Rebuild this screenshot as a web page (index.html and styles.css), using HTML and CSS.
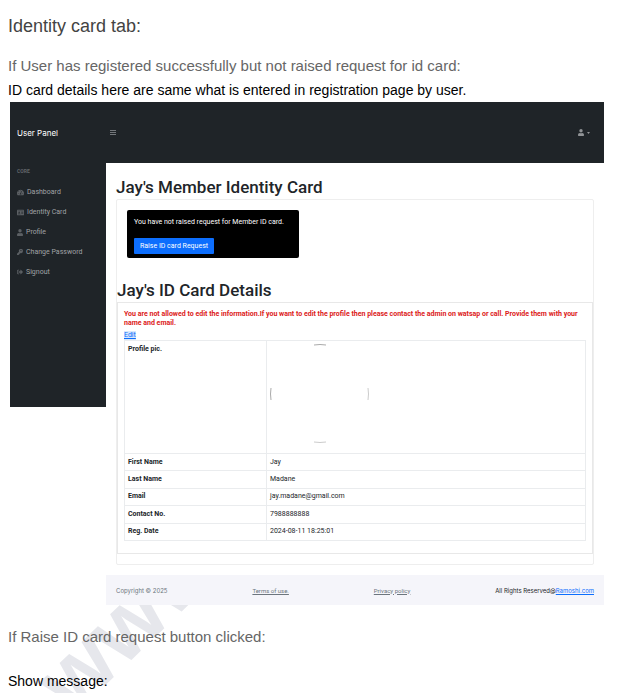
FILE: index.html
```html
<!DOCTYPE html>
<html lang="en">
<head>
<meta charset="utf-8">
<title>Identity card tab</title>
<meta name="viewport" content="width=device-width, initial-scale=1">
<link rel="stylesheet" href="styles.css">
</head>
<body>
<div class="backdrop" aria-hidden="true"><div class="watermark">www</div></div>
<main class="doc">
  <h1 class="doc-title">Identity card tab:</h1>
  <h2 class="doc-step">If User has registered successfully but not raised request for id card:</h2>
  <p class="doc-note">ID card details here are same what is entered in registration page by user.</p>

  <div class="app">
    <header class="topbar">
      <a class="brand" href="#">User Panel</a>
      <button class="toggle" type="button" aria-label="Toggle menu">
        <svg viewBox="0 0 448 512" width="6" height="7"><path d="M0 72h448v56H0zM0 228h448v56H0zM0 384h448v56H0z"/></svg>
      </button>
      <button class="account" type="button" aria-label="Account">
        <svg viewBox="0 0 448 512" width="6" height="7"><path d="M224 256a128 128 0 1 0 0-256 128 128 0 0 0 0 256zm90 32h-17a174 174 0 0 1-146 0h-17A134 134 0 0 0 0 422v42a48 48 0 0 0 48 48h352a48 48 0 0 0 48-48v-42a134 134 0 0 0-134-134z"/></svg>
        <svg viewBox="0 0 6 4" width="3" height="2"><path d="M0 0h6L3 4z"/></svg>
      </button>
    </header>
    <div class="columns">
      <nav class="sidebar">
        <div class="side-label">CORE</div>
        <a class="side-link" href="#"><svg viewBox="0 0 576 512" width="7" height="7"><path fill-rule="evenodd" d="M288 32A288 288 0 0 0 39 464c5 10 16 16 28 16h442c12 0 23-6 28-16A288 288 0 0 0 288 32zm0 50a32 32 0 1 1 0 64 32 32 0 0 1 0-64zM96 384a32 32 0 1 1 0-64 32 32 0 0 1 0 64zm48-160a32 32 0 1 1 0-64 32 32 0 0 1 0 64zm200 192H232a64 64 0 0 1 54-98l62-184 44 14-61 184a64 64 0 0 1 13 84zm136-32a32 32 0 1 1 0-64 32 32 0 0 1 0 64z"/></svg>Dashboard</a>
        <a class="side-link" href="#"><svg viewBox="0 0 576 512" width="7" height="7"><path fill-rule="evenodd" d="M48 32h480a48 48 0 0 1 48 48v352a48 48 0 0 1-48 48H48a48 48 0 0 1-48-48V80a48 48 0 0 1 48-48zm-8 64v24h496V96zm136 80a64 64 0 1 0 0 128 64 64 0 0 0 0-128zM64 400h224c0-44-30-72-66-72h-92c-36 0-66 28-66 72zm288-208v32h160v-32zm0 64v32h160v-32zm0 64v32h160v-32z"/></svg>Identity Card</a>
        <a class="side-link" href="#"><svg viewBox="0 0 448 512" width="6" height="7"><path d="M224 256a128 128 0 1 0 0-256 128 128 0 0 0 0 256zm90 32h-17a174 174 0 0 1-146 0h-17A134 134 0 0 0 0 422v42a48 48 0 0 0 48 48h352a48 48 0 0 0 48-48v-42a134 134 0 0 0-134-134z"/></svg>Profile</a>
        <a class="side-link" href="#"><svg viewBox="0 0 512 512" width="6" height="6"><path fill-rule="evenodd" d="M512 176a176 176 0 0 1-209 173l-31 35h-48v64h-64v64H24a24 24 0 0 1-24-24v-78l171-171A176 176 0 1 1 512 176zm-224-48a48 48 0 1 0 96 0 48 48 0 0 0-96 0z"/></svg>Change Password</a>
        <a class="side-link" href="#"><svg viewBox="0 0 512 512" width="6" height="6"><path d="M497 273 329 441c-15 15-41 4-41-17v-96H152a24 24 0 0 1-24-24v-96a24 24 0 0 1 24-24h136V88c0-21 26-32 41-17l168 168a24 24 0 0 1 0 34zM192 436v-40c0-7-5-12-12-12H96a32 32 0 0 1-32-32V160a32 32 0 0 1 32-32h84c7 0 12-5 12-12V76c0-7-5-12-12-12H96a96 96 0 0 0-96 96v192a96 96 0 0 0 96 96h84c7 0 12-5 12-12z"/></svg>Signout</a>
      </nav>
      <div class="content">
        <section class="page">
          <h3 class="page-title">Jay's Member Identity Card</h3>
          <div class="card">
            <div class="alert">
              <p class="alert-text">You have not raised request for Member ID card.</p>
              <button class="primary" type="button">Raise ID card Request</button>
            </div>
            <h3 class="page-title">Jay's ID Card Details</h3>
            <div class="details">
              <p class="warning">You are not allowed to edit the information.If you want to edit the profile then please contact the admin on watsap or call. Provide them with your name and email.</p>
              <a class="edit" href="#">Edit</a>
              <table class="info">
                <tr class="picture-row"><th scope="row">Profile pic.</th><td><svg viewBox="0 0 100 100" width="100" height="100"><g fill="none" stroke="#aaa" stroke-width="1"><path d="M44 1q6-1 12 0"/><path d="M44 98q6 1 12 0" stroke="#ccc"/><path d="M1 44q-1 6 0 12"/><path d="M98 44q1 6 0 12" stroke="#ccc"/></g></svg></td></tr>
                <tr><th scope="row">First Name</th><td>Jay</td></tr>
                <tr><th scope="row">Last Name</th><td>Madane</td></tr>
                <tr><th scope="row">Email</th><td>jay.madane@gmail.com</td></tr>
                <tr><th scope="row">Contact No.</th><td>7988888888</td></tr>
                <tr><th scope="row">Reg. Date</th><td>2024-08-11 18:25:01</td></tr>
              </table>
            </div>
          </div>
        </section>
        <footer class="footer">
          <span class="copyright">Copyright © 2025</span>
          <a class="legal" href="#">Terms of use.</a>
          <a class="legal" href="#">Privacy policy</a>
          <span class="rights">All Rights Reserved@<a href="#">Ramoshi.com</a></span>
        </footer>
      </div>
    </div>
  </div>

  <h2 class="doc-step">If Raise ID card request button clicked:</h2>
  <p class="doc-note message">Show message:</p>
</main>
</body>
</html>
```
FILE: styles.css
```css
* { box-sizing: border-box; }
body {
  margin: 0;
  min-height: 100vh;
  background: #fff;
  color: #000;
  font-family: "Liberation Sans", Arial, sans-serif;
  position: relative;
  z-index: 0;
}
h1, h2, h3, p { margin: 0; font-weight: 400; }
button { border: 0; padding: 0; background: none; font: inherit; color: inherit; }
svg { display: block; fill: currentColor; flex: none; }

.backdrop { position: absolute; inset: 0; z-index: -1; overflow: clip; }
.watermark {
  position: absolute;
  left: 82px;
  top: 637px;
  font-size: 90px;
  line-height: 90px;
  font-weight: 700;
  color: #e6e7ec;
  transform-origin: 0 100%;
  transform: rotate(-44deg);
}

.doc { padding: 16px 18px 0 8px; }
.doc-title { font-size: 18px; line-height: 20px; color: #434343; }
.doc-step { margin-top: 20px; font-size: 15px; line-height: 20px; color: #666; }
.doc-note { margin-top: 4px; font-size: 14px; line-height: 20px; }
.doc .message { margin-top: 24px; }

.app {
  margin: 2px 0 22px 2px;
  font-family: Roboto, sans-serif;
  font-size: 7px;
  color: #212529;
}
.topbar {
  display: flex;
  align-items: center;
  height: 61px;
  padding: 0 14px 0 7px;
  background: #1f2428;
  color: #909396;
}
.brand { width: 93px; font-family: Inter, sans-serif; font-size: 8px; color: #fff; text-decoration: none; }
.account { display: flex; align-items: center; gap: 3px; margin-left: auto; }

.columns { display: flex; align-items: flex-start; }
.sidebar {
  flex: none;
  width: 96px;
  height: 244px;
  padding: 3px 7px;
  background: #1f2428;
}
.side-label { margin-bottom: 6px; font-size: 5px; line-height: 10px; font-weight: 700; color: #61656a; }
.side-link {
  display: flex;
  align-items: center;
  gap: 3px;
  height: 20px;
  color: #a0a3a6;
  text-decoration: none;
}
.side-link svg { color: #5c6064; }

.content { flex: 1; min-width: 0; background: #fff; }
.page { padding: 12px 10px 10px; }
.page-title { font-size: 17px; line-height: 24px; font-weight: 500; }
.card { border: 1px solid #eee; border-radius: 2px; padding-bottom: 10px; }
.alert {
  width: 172px;
  margin: 10px 0 20px 10px;
  padding: 7px 7px 4px;
  border-radius: 2px;
  background: #000;
  color: #fff;
}
.alert-text { line-height: 11px; margin-bottom: 10px; }
.primary { display: block; height: 16px; padding: 0 6px; border-radius: 1px; background: #0d6efd; color: #fff; }
.details { border: 1px solid #e8e8e8; padding: 7px 6px 12px; }
.warning { color: #dc2020; font-weight: 700; line-height: 9px; }
.edit { display: table; line-height: 9px; margin-top: 3px; color: #0d6efd; background: #d7e7fb; }
.info { width: 100%; height: 201px; border-collapse: collapse; table-layout: fixed; }
.info th, .info td { height: 17px; border: 1px solid #eaecee; padding: 0 3px; text-align: left; line-height: 11px; font-weight: 400; }
.info th { width: 142px; font-weight: 700; }
.info .picture-row th, .info .picture-row td { height: 110px; vertical-align: top; padding-top: 3px; }

.footer {
  display: flex;
  align-items: center;
  justify-content: space-between;
  height: 30px;
  padding: 0 10px;
  background: #f5f5fa;
  color: #6c757d;
  font-size: 6px;
}
.copyright, .rights { font-family: Inter, sans-serif; }
.legal { color: #6c757d; }
.rights { color: #212529; }
.rights a { color: #0d6efd; }
```
